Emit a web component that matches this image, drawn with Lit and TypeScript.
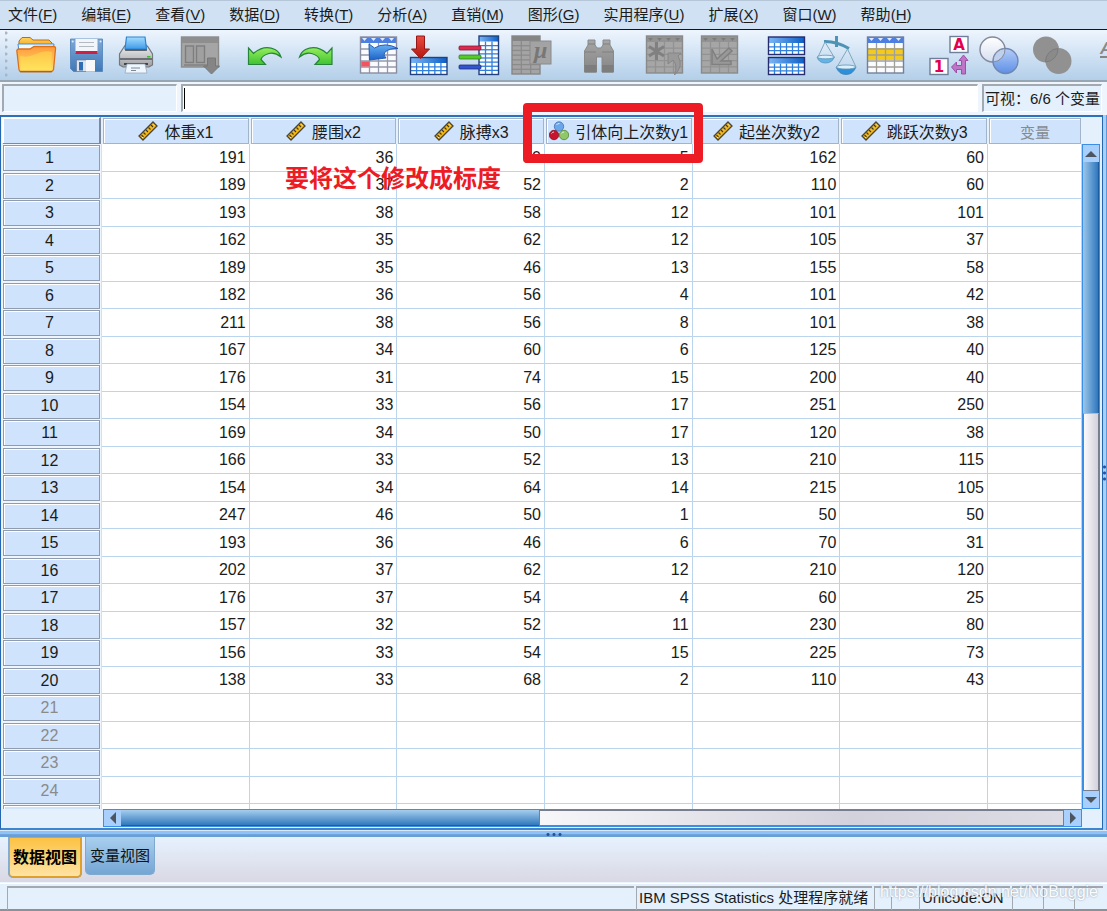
import { LitElement, html, svg, css, nothing } from "lit";
import { customElement, state } from "lit/decorators.js";
import { classMap } from "lit/directives/class-map.js";

type Tool = { name: string; art: unknown; wide?: boolean; off?: boolean };

const MENUS: [string, string][] = [
  ["文件", "F"], ["编辑", "E"], ["查看", "V"], ["数据", "D"], ["转换", "T"], ["分析", "A"],
  ["直销", "M"], ["图形", "G"], ["实用程序", "U"], ["扩展", "X"], ["窗口", "W"], ["帮助", "H"],
];

const COLUMNS = [
  { name: "体重x1", kind: "scale" },
  { name: "腰围x2", kind: "scale" },
  { name: "脉搏x3", kind: "scale" },
  { name: "引体向上次数y1", kind: "nominal" },
  { name: "起坐次数y2", kind: "scale" },
  { name: "跳跃次数y3", kind: "scale" },
];

const ROWS = [
  [191, 36, 50, 5, 162, 60], [189, 37, 52, 2, 110, 60], [193, 38, 58, 12, 101, 101],
  [162, 35, 62, 12, 105, 37], [189, 35, 46, 13, 155, 58], [182, 36, 56, 4, 101, 42],
  [211, 38, 56, 8, 101, 38], [167, 34, 60, 6, 125, 40], [176, 31, 74, 15, 200, 40],
  [154, 33, 56, 17, 251, 250], [169, 34, 50, 17, 120, 38], [166, 33, 52, 13, 210, 115],
  [154, 34, 64, 14, 215, 105], [247, 46, 50, 1, 50, 50], [193, 36, 46, 6, 70, 31],
  [202, 37, 62, 12, 210, 120], [176, 37, 54, 4, 60, 25], [157, 32, 52, 11, 230, 80],
  [156, 33, 54, 15, 225, 73], [138, 33, 68, 2, 110, 43],
];
const ROW_COUNT = 25;

/* A small ruled table used by several toolbar pictures. */
const sheet = (x: number, y: number, w: number, h: number, head: number, cols: number, rows: number,
  fill: string, line: string, headFill: string, edge = line) => svg`
  <rect x=${x} y=${y} width=${w} height=${h} fill=${fill}></rect>
  ${Array.from({ length: cols - 1 }, (_, i) => svg`<path stroke=${line} stroke-width="1.3"
    d=${`M${x + ((i + 1) * w) / cols} ${y + head}V${y + h}`}></path>`)}
  ${Array.from({ length: rows - 1 }, (_, i) => svg`<path stroke=${line} stroke-width="1.3"
    d=${`M${x} ${y + head + ((i + 1) * (h - head)) / rows}H${x + w}`}></path>`)}
  <rect x=${x} y=${y} width=${w} height=${head} fill=${headFill}></rect>
  <rect x=${x} y=${y} width=${w} height=${h} fill="none" stroke=${edge} stroke-width="1.4"></rect>`;

const headMarks = (x: number, y: number, step: number, n: number, fill: string) =>
  Array.from({ length: n }, (_, i) => svg`<path fill=${fill}
    d=${`M${x + i * step} ${y}h5l-2.5 3z`}></path>`);

const GROUPS: Tool[][] = [
  [
    { name: "打开", art: svg`
      <path d="M3 12V6L6 2.5H14L17 5H33L36 8V14H3z" fill="url(#amber)" stroke="#c26a12" stroke-width="1"></path>
      <path d="M2 9H38L37 17H3z" fill="#f4f9ff" stroke="#3c8fdc" stroke-width="1"></path>
      <path d="M.8 15.500Q1 14 3 14H14L18 11.500H37.500Q40 11.500 39.500 14L37.500 34.500Q37 36.500 35 36.500H5Q3.200 36.500 3 34.500z" fill="url(#folder)" stroke="#d9701c" stroke-width="1.300"></path>
      <path d="M4 21Q12 23 20 19T36 17L35 34H5z" fill="#ffe94f" opacity=".45"></path>
      <path d="M4 36.800H36" stroke="#9a5f1b" stroke-width="1"></path>` },
    { name: "保存", art: svg`
      <path d="M4.500 4H36.500V36.500H7.500L4.500 33.500z" fill="url(#disk)" stroke="#4e80b6" stroke-width=".8"></path>
      <rect x="9.500" y="4" width="22" height="14" fill="#f2f5f9"></rect>
      <path d="M13 7.500H28M13 11.500H28" stroke="#b4bac2" stroke-width="1.200"></path>
      <rect x="9.500" y="16" width="22" height="3" fill="#d01f45"></rect>
      <path d="M10.500 25H29V36.500H10.500z" fill="#dce3ec" stroke="#5b7596" stroke-width=".6"></path>
      <rect x="13" y="27" width="4" height="8.500" fill="#2f6db4"></rect>
      <path d="M20 25H29V36.500H20z" fill="#f8f8f8"></path>
      <circle cx="6.700" cy="6.500" r="1" fill="#dcefff"></circle><circle cx="34.500" cy="6.500" r="1" fill="#dcefff"></circle>` },
    { name: "打印", art: svg`
      <path d="M8 12L10.500 9V15H29V9L32 12L36.500 19V30L33 32H7L3.500 30V19z" fill="url(#metal)" stroke="#74777c" stroke-width="1.200"></path>
      <path d="M10.500 2H29L30.500 14H9z" fill="url(#sky)" stroke="#2b84d2" stroke-width="1.200"></path>
      <path d="M9 15H31" stroke="#4b4f55" stroke-width="1.500"></path>
      <path d="M4 24H36" stroke="#6c6f74" stroke-width="2"></path>
      <path d="M8 29H32" stroke="#42464c" stroke-width="2"></path>
      <rect x="31" y="21" width="3.500" height="1.500" fill="#35c424"></rect>
      <path d="M11 29H29L31 38H9z" fill="#eef7ff" stroke="#99a7b8" stroke-width=".8"></path>
      <path d="M15 33H24M15 35.500H20" stroke="#7f8894"></path>` },
  ],
  [
    { name: "最近使用的对话框", off: true, art: svg`
      <rect x="1.500" y="2" width="37" height="30" fill="#a5a5a5" stroke="#8b8b8b" stroke-width="1.400"></rect>
      <rect x="1.500" y="2" width="37" height="6" fill="#8e8e8e"></rect>
      <rect x="5.500" y="11" width="8" height="16.500" fill="#a0a0a0" stroke="#7e7e7e" stroke-width="1.400"></rect>
      <rect x="16.500" y="11" width="8" height="16.500" fill="#a0a0a0" stroke="#7e7e7e" stroke-width="1.400"></rect>
      <path d="M4 30H27" stroke="#7e7e7e" stroke-width="1.400"></path>
      <path d="M27.500 23H35.500V31H39.500L31.500 39L23.500 31H27.500z" fill="#858585" stroke="#777"></path>` },
  ],
  [
    { name: "撤消", art: svg`<path d="M4.500 13L9.500 18.500Q20 9.500 31 14.500Q35.500 17 37 22Q31 17 25 18.500Q18 20.500 17 24.500L21.500 29.500H4.500z" fill="url(#leaf)" stroke="#26853a" stroke-width="1.200"></path>` },
    { name: "重做", art: svg`<path transform="translate(42.500 0) scale(-1 1)" d="M4.500 13L9.500 18.500Q20 9.500 31 14.500Q35.500 17 37 22Q31 17 25 18.500Q18 20.500 17 24.500L21.500 29.500H4.500z" fill="url(#leaf)" stroke="#26853a" stroke-width="1.200"></path>` },
  ],
  [
    { name: "转到个案", art: svg`
      ${sheet(2.5, 2, 36, 36, 6, 4, 5, "#fafbfe", "#9498a8", "#4c7fe0", "#8a8da0")}
      ${headMarks(4, 3, 9, 4, "#dfeaff")}
      <rect x="3.200" y="26.500" width="8" height="5" fill="#f2545f"></rect>
      <path d="M11 9L16.500 13Q27 6.500 40 13.500Q32 13 27 17Q24.500 20 28 23L11.500 25z" fill="url(#azure)" stroke="#1c55b2" stroke-width=".9"></path>` },
    { name: "转到变量", art: svg`
      ${sheet(2.5, 22.5, 36.5, 17, 5.5, 6, 3, "#fff", "#2f7fdc", "url(#bar)", "#23407e")}
      <path d="M8.500 1H16.500V14H21.500L12.500 23.500L3.500 14H8.500z" fill="url(#ruby)" stroke="#951616"></path>` },
    { name: "变量", art: svg`
      ${sheet(21, 1, 19.5, 38.5, 5.5, 3, 8, "#fff", "#2f7fdc", "url(#bar)", "#23407e")}
      <rect x="1" y="11" width="22" height="4" rx="1" fill="#dc2a4f" stroke="#8e1732" stroke-width=".8"></rect>
      <rect x="1" y="20" width="22" height="4" rx="1" fill="#54cb27" stroke="#347c1a" stroke-width=".8"></rect>
      <rect x="1" y="30" width="22" height="4" rx="1" fill="#3155cf" stroke="#1d2f84" stroke-width=".8"></rect>` },
    { name: "描述统计", off: true, wide: true, art: svg`
      ${sheet(4, 1, 28, 38, 5, 3, 7, "#a4a4a4", "#8b8b8b", "#858585", "#878787")}
      <rect x="22" y="6" width="21" height="23" fill="#a3a3a3" stroke="#8a8a8a"></rect>
      <text x="26" y="23" font-family="Liberation Serif, serif" font-style="italic" font-weight="bold" font-size="24" fill="#777">μ</text>` },
  ],
  [
    { name: "查找", off: true, wide: true, art: svg`
      <path d="M12 5H19V10L21 13H25L27 10V5H34V10L37.500 16V37H26V22H20.500V37H8.500V16L12 10z" fill="url(#grey)" stroke="#898989"></path>
      <path d="M8.500 30H20.500V37.500H8.500zM26 30H37.500V37.500H26z" fill="#7d7d7d"></path>
      <path d="M12 9H19M27 9H34M9 17H20M26 17H37" stroke="#808080"></path>` },
  ],
  [
    { name: "插入个案", off: true, wide: true, art: svg`
      ${sheet(2.5, 1, 36, 37, 6, 4, 5, "#a6a6a6", "#929292", "#929292", "#8a8a8a")}
      ${headMarks(4, 3, 9, 4, "#7b7b7b")}
      <path d="M12.500 7V25M5 11.500L20 21M5 21L20 11.500" stroke="#808080" stroke-width="3"></path>
      <path d="M24 18H37L34 21Q40 31 30.500 40Q34 30 29 25L24 29z" fill="#999" stroke="#868686"></path>` },
    { name: "插入变量", off: true, wide: true, art: svg`
      ${sheet(3.5, 1, 36, 37, 6, 4, 5, "#a6a6a6", "#929292", "#929292", "#8a8a8a")}
      ${headMarks(5, 3, 9, 4, "#7b7b7b")}
      <path d="M14 14V29.500H33V26H23L34 16L31 13L19 24z" fill="#989898" stroke="#808080" stroke-width="1.500"></path>` },
  ],
  [
    { name: "拆分文件", art: svg`
      ${sheet(2.5, 2, 36, 17.5, 6, 6, 3, "#fff", "#2f7fdc", "url(#bar)", "#252d6e")}
      ${sheet(2.5, 22.5, 36, 17, 6, 6, 3, "#fff", "#2f7fdc", "url(#bar)", "#252d6e")}` },
    { name: "个案加权", art: svg`
      <path d="M20.500 1V12M8 6.500Q20 6 33 13.500" stroke="#4c93b5" stroke-width="3" fill="none"></path>
      <path d="M9 7L2 22M9 7L18 22M31.500 14L21 32M31.500 14L40 32" stroke="#7fa8bd" fill="none"></path>
      <path d="M1 22H18.500Q16 28 9.500 28T1 22z" fill="#63b4e8" stroke="#5b92b6" stroke-width=".8"></path>
      <ellipse cx="9.700" cy="22" rx="8.500" ry="1.800" fill="#dcf1ff" stroke="#5f95b4" stroke-width=".8"></ellipse>
      <path d="M20 32H40Q37 39.500 30 39.500T20 32z" fill="#2d90da" stroke="#3c7db0" stroke-width=".8"></path>
      <ellipse cx="30" cy="32" rx="9.800" ry="2" fill="#dcf1ff" stroke="#5f95b4" stroke-width=".8"></ellipse>` },
    { name: "选择个案", art: svg`
      <rect x="1.500" y="2" width="36" height="36" fill="#fbfcfe"></rect>
      <rect x="1.500" y="13" width="36" height="12" fill="#f4cb1c"></rect>
      ${sheet(1.5, 2, 36, 36, 6, 4, 5, "none", "#a09f98", "#4c7fe0", "#72809f")}
      ${headMarks(3, 3, 9, 4, "#dfeaff")}` },
  ],
  [
    { name: "值标签", art: svg`
      <rect x="20" y="1.500" width="18" height="16" fill="#fff" stroke="#6e7f97" stroke-width="1.400"></rect>
      <text x="29" y="15" text-anchor="middle" font-family="DejaVu Sans, sans-serif" font-weight="bold" font-size="15" fill="#e4004f">A</text>
      <rect x="0" y="23.500" width="18" height="16" fill="#fff" stroke="#6e7f97" stroke-width="1.400"></rect>
      <text x="9" y="37" text-anchor="middle" font-family="DejaVu Sans, sans-serif" font-weight="bold" font-size="15" fill="#e4004f">1</text>
      <path d="M33.500 20L38 25.500H35.500V39H31.500V34.500H26.500V38L21.500 32L26.500 27V30.500H31.500V25.500H29z" fill="#c074c8" stroke="#96489f" stroke-width=".9"></path>` },
    { name: "使用变量集", art: svg`
      <circle cx="12.500" cy="14.500" r="12.500" fill="url(#pearl)" stroke="#83899a" stroke-width="1.400"></circle>
      <circle cx="25.500" cy="26" r="12.500" fill="url(#lens)" stroke="#6f86b0" stroke-width="1.400"></circle>
      <path d="M13.200 27A12.500 12.500 0 0 1 25 13.500A12.500 12.500 0 0 1 13.200 27z" fill="#bfd0ef" stroke="#83899a"></path>` },
    { name: "显示所有变量", off: true, art: svg`
      <circle cx="16" cy="14.500" r="13" fill="#919191"></circle>
      <circle cx="28.500" cy="26" r="13" fill="#919191"></circle>
      <path d="M15.500 27A13 13 0 0 1 28 13.500A13 13 0 0 1 15.500 27z" fill="#8a8a8a" stroke="#7c7c7c"></path>` },
  ],
  [
    { name: "拼写检查", off: true, wide: true, art: svg`
      <text x="6" y="19" font-family="Liberation Sans, sans-serif" font-style="italic" font-weight="bold" font-size="17" fill="#8a8a8a">ABC</text>
      <path d="M6 22H40" stroke="#858585" stroke-width="2"></path>` },
  ],
];

const grad = (id: string, a: string, b: string, flat = false) => svg`
  <linearGradient id=${id} x1="0" y1="0" x2=${flat ? 1 : 0} y2=${flat ? 0 : 1}>
    <stop offset="0" stop-color=${a}></stop><stop offset="1" stop-color=${b}></stop>
  </linearGradient>`;

const DEFS = svg`<defs>
  ${grad("amber", "#ffd45a", "#f09a18")}${grad("folder", "#ff9a3c", "#ffe36a")}
  ${grad("disk", "#7fa9d6", "#3f78b8")}${grad("sky", "#a5dcff", "#3f9be8")}
  ${grad("metal", "#f4f4f5", "#9c9ea2")}${grad("leaf", "#96ee5b", "#3fc231")}
  ${grad("azure", "#69b3f5", "#1d62c8")}${grad("bar", "#7db6f5", "#0a5fc8", true)}
  ${grad("ruby", "#ea4a40", "#b3160f")}${grad("grey", "#a6a6a6", "#858585")}
  ${grad("pearl", "#ffffff", "#d5def0")}${grad("lens", "#b5cdf8", "#5e8fe6")}
</defs>`;

const picture = (t: Tool) => html`<svg class="art" width=${t.wide ? 44 : 40} height="40"
  viewBox=${`0 0 ${t.wide ? 44 : 40} 40`} aria-hidden="true">${t.art}</svg>`;

const ruler = html`<svg width="20" height="20" viewBox="0 0 20 20" aria-hidden="true">
  <path d="M15 1L19 5L5 19L1 15z" fill="#f3b91b" stroke="#4a4435" stroke-width="1.300"></path>
  <path d="M13 4l2 2M10.500 6.500l2 2M8 9l2 2M5.500 11.500l2 2M3.500 14l2 2" stroke="#3f3a2c" stroke-width="1.100"></path>
  <path d="M15.500 3.500l1 1M4 16l1 1" stroke="#fff0a0"></path></svg>`;

const balls = html`<svg width="20" height="20" viewBox="0 0 20 20" aria-hidden="true">
  <circle cx="10" cy="5.500" r="4.700" fill="#6ba6ea" stroke="#3a72b8" stroke-width=".8"></circle>
  <circle cx="5" cy="14" r="4.700" fill="#c8142c" stroke="#83101f" stroke-width=".8"></circle>
  <circle cx="15" cy="14" r="4.700" fill="#8fc769" stroke="#4f8433" stroke-width=".8"></circle>
  <path d="M7.500 4a3 3 0 0 1 3-1.500M2.500 12.500a3 3 0 0 1 2.500-1.500M12.500 12.500a3 3 0 0 1 2.500-1.500" stroke="#fff" fill="none" opacity=".75"></path></svg>`;

const arrow = (d: string) => html`<svg width="12" height="12" viewBox="0 0 12 12" aria-hidden="true"><path d=${d} fill="#4c5560"></path></svg>`;

@customElement("app-root")
export class AppRoot extends LitElement {
  static styles = css`
    :host {
      display: flex; flex-direction: column; height: 100vh; overflow: hidden; position: relative;
      background: #e4f0fc; color: #1b1b1b;
      font: 15px/20px "Liberation Sans", "Noto Sans CJK SC", sans-serif;
    }
    * { box-sizing: border-box; }
    button, input { font: inherit; color: inherit; margin: 0; padding: 0; border: 0; background: none; border-radius: 0; }
    svg { display: block; }
    .defs { position: absolute; width: 0; height: 0; }

    .menus { display: flex; gap: 24px; flex: none; height: 30px; padding: 0 8px; background: #cfe1f2;
      border-top: 1px solid #b4c6d8; border-bottom: 1px solid #10161c; white-space: nowrap; }
    .menus u { text-underline-offset: 2px; }

    .tools { display: flex; align-items: center; gap: 24px; flex: none; height: 52px; padding-left: 5px; overflow: hidden;
      background: linear-gradient(#eef5fd, #d3e4f5 45%, #b3cfe9); border-bottom: 2px solid #98a5b2; }
    .grip { width: 3px; height: 48px; margin-right: -16px; flex: none;
      background: radial-gradient(circle at 1px 2px, #a9b6c4 1px, transparent 2px) 0 0 / 3px 7px; }
    .group { display: flex; gap: 10px; flex: none; }
    .tool { width: 40px; height: 40px; }
    .tool.wide { width: 44px; }
    .art { overflow: visible; }

    .entry { display: flex; gap: 4px; flex: none; height: 33px; padding: 2px 5px 3px 2px; background: #eef5fc; }
    .well { border: 1px solid #fff; border-top: 2px solid #a3a9b0; border-left: 2px solid #a3a9b0; background: #e4f0fc; height: 28px; }
    .who { width: 175px; }
    .edit { flex: 1; min-width: 0; display: flex; align-items: center; background: #fff; }
    .edit input { flex: 1; min-width: 0; outline: 0; padding-left: 4px; }
    .caret { width: 1px; height: 21px; background: #000; margin-left: 1px; }
    .count { width: 120px; padding: 3px 1px; white-space: nowrap; overflow: hidden; }

    .middle { flex: 1; min-height: 0; display: flex; background: #a8cffa; }
    .sheet { flex: 1; min-width: 0; display: grid; grid-template: minmax(0, 1fr) 19px / minmax(0, 1fr) 20px;
      border: 1px solid #2467b0; border-top: 2px solid #2a72bb; border-bottom: 2px solid #3c86cf; background: #e4f0fc; padding-left: 1px; }
    .split-v { width: 4px; flex: none; display: flex; align-items: center; justify-content: center; border-right: 1px solid #5f9ad8; }
    .split-v i { width: 3px; height: 17px; background: radial-gradient(circle, #274f9b 1px, transparent 2px) 0 0 / 3px 6px; }

    .clip { overflow: hidden; background: linear-gradient(90deg, #e4f0fc 100px, #fff 0); }
    table { width: 100%; table-layout: fixed; border-spacing: 0; font-size: 16px; line-height: 20px; }
    .c-row { width: 100px; }
    .c-new { width: 94px; }
    th, td { padding: 0; font-weight: normal; }
    thead th { height: 27px; background: #e4f0fc; padding: 1px 1px 0 0; }
    tbody tr { height: 28px; }
    tbody tr:nth-child(even) { height: 27px; }
    td { border-right: 1px solid #bcd5ee; border-bottom: 1px solid #bcd5ee; text-align: right; padding-right: 3px; background: #fff; }
    tbody th { padding: 0 1px; border-right: 1px solid #cfe1f2; background: #eef5fc; }
    .key { height: 26px; border: 1px solid #8f9cb0; box-shadow: inset 1px 1px #fff; background: #cfe3fc; padding: 2px 4px 0 0; }
    .key.name { display: flex; align-items: center; justify-content: center; gap: 6px; white-space: nowrap; border-color: #a3b3c8; padding: 4px 0 0; margin-left: 1px; }
    .key.name svg { margin-top: -4px; }
    .key.corner { border-color: #fff #7d899c #7d899c #fff; border-width: 1px 2px 2px 1px; height: 28px; margin: -1px 0; }
    .key.new { justify-content: center; color: #858b92; font-size: 15px; }
    .blank .key { color: #8a8a8a; }

    .bar { display: flex; background: #4f97de; border: 1px solid #3c8fe6; }
    .bar button { flex: none; display: flex; align-items: center; justify-content: center; background: #a9d0fc; }
    .bar.v { flex-direction: column; margin: 27px 2px 0 0; }
    .bar.v button { height: 17px; }
    .bar.h { margin-left: 101px; height: 18px; }
    .bar.h button { width: 17px; }
    .thumb.v { flex: 251; background: linear-gradient(90deg, #9cc6ea, #2f78bd); border-right: 1px solid #1d5ea3; }
    .track.v { flex: 376; background: linear-gradient(90deg, #fafafc, #d3d1dc); border: 1px solid #777f8e; border-top-color: #8cc4ff; }
    .thumb.h { flex: 419; background: linear-gradient(#a5cdee, #3179bd); border-bottom: 1px solid #1d5ea3; }
    .track.h { flex: 524; background: linear-gradient(90deg, #f7f7fa, #d3d1dc 60%, #dddbe3); border: 1px solid #777f8e; }

    .split-h { flex: none; height: 7px; display: flex; align-items: center; justify-content: center;
      background: linear-gradient(#8fc3f8, #8fc3f8 50%, #6a9fd6 60%); border-top: 1px solid #d8eafc; }
    .split-h i { width: 18px; height: 3px; background: radial-gradient(circle, #274f9b 1px, transparent 2px) 0 0 / 6px 3px; }

    .views { flex: none; display: flex; align-items: flex-start; gap: 3px; height: 46px; padding-left: 8px;
      background: linear-gradient(#e6f2fe, #d9d8e4); border-bottom: 1px solid #eef4fb; }
    .view { height: 38px; padding: 0 4px; border: 1px solid #7fa9cf; border-top: 0; border-radius: 0 0 5px 5px;
      background: linear-gradient(#a9cfee, #74a6d4); color: #0c1116; width: 70px; white-space: nowrap; }
    .view.on { height: 41px; width: 74px; font-size: 16px; font-weight: bold; border: 2px solid #dfa02c; border-top: 0; outline: 1px solid #84acd0; outline-offset: -1px;
      background: linear-gradient(#fcc240, #ffe3a4); padding: 2px 2px 0; color: #000; }

    .status { flex: none; display: flex; gap: 2px; height: 28px; padding: 2px 4px 0 7px; border-top: 1px solid #fff; border-bottom: 2px solid #8d9196; }
    .slot { height: 24px; border-top: 2px solid #a3a9b0; border-left: 1px solid #a3a9b0; white-space: nowrap; padding: 0 2px; }
    .slot.fill { flex: 1; min-width: 0; }
    .s-msg { width: 236px; }
    .s-16 { width: 15px; }
    .s-26 { width: 26px; }
    .s-uni { width: 91px; }
    .s-29 { width: 29px; }

    .frame { position: absolute; left: 523px; top: 103px; width: 180px; height: 60px; border: 9px solid #ed1c24; border-radius: 4px; pointer-events: none; }
    .remark { position: absolute; left: 285px; top: 159px; margin: 0; font: bold 24px/36px "Noto Sans CJK SC", sans-serif; color: #ed1c24; white-space: nowrap; pointer-events: none; }
    .mark { position: absolute; right: 9px; bottom: 9px; font-size: 16px; line-height: 20px; color: #fff; text-shadow: 0 0 2px #7c8a9c; opacity: .85; pointer-events: none; }
  `;

  @state() private view = 0;

  private row(i: number) {
    const values = ROWS[i];
    return html`<tr class=${classMap({ blank: !values })}>
      <th scope="row"><div class="key">${i + 1}</div></th>
      ${COLUMNS.map((_, c) => html`<td>${values ? values[c] : nothing}</td>`)}
      <td></td>
    </tr>`;
  }

  render() {
    return html`
      <svg class="defs" aria-hidden="true">${DEFS}</svg>
      <nav class="menus" aria-label="菜单">
        ${MENUS.map(([t, k]) => html`<button>${t}(<u>${k}</u>)</button>`)}
      </nav>
      <div class="tools" role="toolbar">
        <span class="grip"></span>
        ${GROUPS.map((g) => html`<div class="group">${g.map((t) => html`
          <button class=${classMap({ tool: true, wide: !!t.wide })} aria-label=${t.name} ?disabled=${t.off}>${picture(t)}</button>`)}</div>`)}
      </div>
      <div class="entry">
        <input class="well who" aria-label="单元格" readonly>
        <div class="well edit"><span class="caret"></span><input aria-label="单元格值"></div>
        <div class="well count">可视：6/6 个变量</div>
      </div>
      <main class="middle">
        <section class="sheet">
          <div class="clip">
            <table>
              <colgroup><col class="c-row">${COLUMNS.map(() => html`<col>`)}<col class="c-new"></colgroup>
              <thead><tr>
                <th><div class="key corner"></div></th>
                ${COLUMNS.map((c) => html`<th scope="col"><div class="key name">${c.kind === "scale" ? ruler : balls}<span>${c.name}</span></div></th>`)}
                <th scope="col"><div class="key name new">变量</div></th>
              </tr></thead>
              <tbody>${Array.from({ length: ROW_COUNT }, (_, i) => this.row(i))}</tbody>
            </table>
          </div>
          <div class="bar v">
            <button aria-label="向上">${arrow("M6 3L12 9H0z")}</button>
            <div class="thumb v"></div><div class="track v"></div>
            <button aria-label="向下">${arrow("M0 3H12L6 9z")}</button>
          </div>
          <div class="bar h">
            <button aria-label="向左">${arrow("M3 6L9 0V12z")}</button>
            <div class="thumb h"></div><div class="track h"></div>
            <button aria-label="向右">${arrow("M3 0L9 6L3 12z")}</button>
          </div>
        </section>
        <div class="split-v"><i></i></div>
      </main>
      <div class="split-h"><i></i></div>
      <div class="views">
        ${["数据视图", "变量视图"].map((v, i) => html`
          <button class=${classMap({ view: true, on: this.view === i })} @click=${() => (this.view = i)}>${v}</button>`)}
      </div>
      <footer class="status">
        <div class="slot fill"></div>
        <div class="slot s-msg">IBM SPSS Statistics 处理程序就绪</div>
        <div class="slot s-16"></div>
        <div class="slot s-26"></div>
        <div class="slot s-uni">Unicode:ON</div>
        <div class="slot s-29"></div>
        <div class="slot s-29"></div>
        <div class="slot s-29"></div>
      </footer>
      <div class="frame"></div>
      <p class="remark">要将这个修改成标度</p>
      <span class="mark">https://blog.csdn.net/NoBuggie</span>
    `;
  }
}
